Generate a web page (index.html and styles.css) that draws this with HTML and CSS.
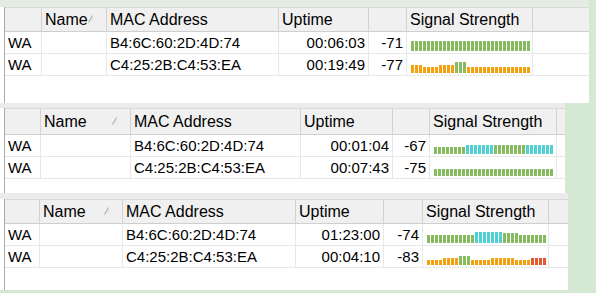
FILE: index.html
```html
<!DOCTYPE html>
<html>
<head>
<meta charset="utf-8">
<link rel="stylesheet" href="styles.css">
</head>
<body>
<div class="stack">
  <div class="panel p1">
    <div class="band"></div>
    <div class="lv">
      <div class="row hdr">
        <div class="cell"></div>
        <div class="cell name"><span>Name</span><svg class="sort" width="8" height="8" viewBox="0 0 8 8"><polygon points="0.5,7.5 4.5,0.5 7.5,7.5" fill="#ececec"/><line x1="0.5" y1="7.5" x2="4.5" y2="0.5" stroke="#a0a0a0" stroke-width="1"/></svg></div>
        <div class="cell">MAC Address</div>
        <div class="cell">Uptime</div>
        <div class="cell"></div>
        <div class="cell">Signal Strength</div>
        <div class="cell last"></div>
      </div>
      <div class="row">
        <div class="cell">WA</div>
        <div class="cell"></div>
        <div class="cell">B4:6C:60:2D:4D:74</div>
        <div class="cell r">00:06:03</div>
        <div class="cell r">-71</div>
        <div class="cell bars"><i class="g h10"></i><i class="g h10"></i><i class="g h10"></i><i class="g h10"></i><i class="g h10"></i><i class="g h10"></i><i class="g h10"></i><i class="g h10"></i><i class="g h10"></i><i class="g h10"></i><i class="g h10"></i><i class="g h10"></i><i class="g h10"></i><i class="g h10"></i><i class="g h10"></i><i class="g h10"></i><i class="g h10"></i><i class="g h10"></i><i class="g h10"></i><i class="g h10"></i><i class="g h10"></i><i class="g h10"></i><i class="g h10"></i><i class="g h10"></i><i class="g h10"></i><i class="g h10"></i><i class="g h10"></i><i class="g h10"></i><i class="g h10"></i><i class="g h10"></i></div>
        <div class="cell last"></div>
      </div>
      <div class="row">
        <div class="cell">WA</div>
        <div class="cell"></div>
        <div class="cell">C4:25:2B:C4:53:EA</div>
        <div class="cell r">00:19:49</div>
        <div class="cell r">-77</div>
        <div class="cell bars"><i class="o h8"></i><i class="o h8"></i><i class="o h8"></i><i class="o h6"></i><i class="o h6"></i><i class="o h6"></i><i class="o h6"></i><i class="o h8"></i><i class="o h8"></i><i class="o h8"></i><i class="o h8"></i><i class="g h11"></i><i class="g h11"></i><i class="g h11"></i><i class="o h6"></i><i class="o h6"></i><i class="o h6"></i><i class="o h6"></i><i class="o h6"></i><i class="o h6"></i><i class="o h6"></i><i class="o h6"></i><i class="o h6"></i><i class="o h6"></i><i class="o h6"></i><i class="o h6"></i><i class="o h6"></i><i class="o h6"></i><i class="o h6"></i><i class="o h6"></i></div>
        <div class="cell last"></div>
      </div>
    </div>
  </div>

  <div class="panel p2">
    <div class="band"></div>
    <div class="lv">
      <div class="row hdr">
        <div class="cell"></div>
        <div class="cell name"><span>Name</span><svg class="sort" width="8" height="8" viewBox="0 0 8 8"><polygon points="0.5,7.5 4.5,0.5 7.5,7.5" fill="#ececec"/><line x1="0.5" y1="7.5" x2="4.5" y2="0.5" stroke="#a0a0a0" stroke-width="1"/></svg></div>
        <div class="cell">MAC Address</div>
        <div class="cell">Uptime</div>
        <div class="cell"></div>
        <div class="cell">Signal Strength</div>
        <div class="cell last"></div>
      </div>
      <div class="row">
        <div class="cell">WA</div>
        <div class="cell"></div>
        <div class="cell">B4:6C:60:2D:4D:74</div>
        <div class="cell r">00:01:04</div>
        <div class="cell r">-67</div>
        <div class="cell bars"><i class="g h7"></i><i class="g h7"></i><i class="g h7"></i><i class="g h7"></i><i class="g h7"></i><i class="g h7"></i><i class="g h7"></i><i class="g h7"></i><i class="c h9"></i><i class="c h9"></i><i class="c h9"></i><i class="c h9"></i><i class="c h9"></i><i class="c h9"></i><i class="c h9"></i><i class="g h9"></i><i class="g h9"></i><i class="g h9"></i><i class="g h9"></i><i class="g h9"></i><i class="g h9"></i><i class="g h9"></i><i class="g h9"></i><i class="c h9"></i><i class="c h9"></i><i class="c h9"></i><i class="c h9"></i><i class="c h9"></i><i class="c h9"></i><i class="c h9"></i></div>
        <div class="cell last"></div>
      </div>
      <div class="row">
        <div class="cell">WA</div>
        <div class="cell"></div>
        <div class="cell">C4:25:2B:C4:53:EA</div>
        <div class="cell r">00:07:43</div>
        <div class="cell r">-75</div>
        <div class="cell bars"><i class="g h7"></i><i class="g h7"></i><i class="g h7"></i><i class="g h7"></i><i class="g h7"></i><i class="g h7"></i><i class="g h7"></i><i class="g h7"></i><i class="g h7"></i><i class="g h7"></i><i class="g h7"></i><i class="g h7"></i><i class="g h7"></i><i class="g h7"></i><i class="g h7"></i><i class="g h7"></i><i class="g h7"></i><i class="g h7"></i><i class="g h7"></i><i class="g h7"></i><i class="g h7"></i><i class="g h7"></i><i class="g h7"></i><i class="g h7"></i><i class="g h7"></i><i class="g h7"></i><i class="g h7"></i><i class="g h7"></i><i class="g h7"></i><i class="g h7"></i></div>
        <div class="cell last"></div>
      </div>
    </div>
  </div>

  <div class="panel p3">
    <div class="band"></div>
    <div class="lv">
      <div class="row hdr">
        <div class="cell"></div>
        <div class="cell name"><span>Name</span><svg class="sort" width="8" height="8" viewBox="0 0 8 8"><polygon points="0.5,7.5 4.5,0.5 7.5,7.5" fill="#ececec"/><line x1="0.5" y1="7.5" x2="4.5" y2="0.5" stroke="#a0a0a0" stroke-width="1"/></svg></div>
        <div class="cell">MAC Address</div>
        <div class="cell">Uptime</div>
        <div class="cell"></div>
        <div class="cell">Signal Strength</div>
        <div class="cell last"></div>
      </div>
      <div class="row">
        <div class="cell">WA</div>
        <div class="cell"></div>
        <div class="cell">B4:6C:60:2D:4D:74</div>
        <div class="cell r">01:23:00</div>
        <div class="cell r">-74</div>
        <div class="cell bars"><i class="g h8"></i><i class="g h8"></i><i class="g h8"></i><i class="g h8"></i><i class="g h8"></i><i class="g h8"></i><i class="g h8"></i><i class="g h8"></i><i class="g h8"></i><i class="g h8"></i><i class="g h8"></i><i class="g h8"></i><i class="c h11"></i><i class="c h11"></i><i class="c h11"></i><i class="c h11"></i><i class="c h11"></i><i class="c h11"></i><i class="c h11"></i><i class="g h10"></i><i class="g h10"></i><i class="g h10"></i><i class="g h10"></i><i class="g h8"></i><i class="g h8"></i><i class="g h8"></i><i class="g h8"></i><i class="g h8"></i><i class="g h8"></i><i class="g h8"></i></div>
        <div class="cell last"></div>
      </div>
      <div class="row">
        <div class="cell">WA</div>
        <div class="cell"></div>
        <div class="cell">C4:25:2B:C4:53:EA</div>
        <div class="cell r">00:04:10</div>
        <div class="cell r">-83</div>
        <div class="cell bars"><i class="o h5"></i><i class="o h5"></i><i class="o h5"></i><i class="o h5"></i><i class="o h7"></i><i class="o h7"></i><i class="o h7"></i><i class="o h7"></i><i class="g h9"></i><i class="g h9"></i><i class="g h9"></i><i class="o h5"></i><i class="o h5"></i><i class="o h5"></i><i class="o h5"></i><i class="o h5"></i><i class="o h7"></i><i class="o h7"></i><i class="o h7"></i><i class="o h7"></i><i class="o h7"></i><i class="o h7"></i><i class="o h5"></i><i class="o h5"></i><i class="o h5"></i><i class="o h5"></i><i class="rd h7"></i><i class="rd h7"></i><i class="rd h7"></i><i class="rd h7"></i></div>
        <div class="cell last"></div>
      </div>
    </div>
  </div>
</div>
</body>
</html>
```
FILE: styles.css
```css
html, body {
  margin: 0;
  padding: 0;
}
body {
  width: 596px;
  height: 293px;
  overflow: hidden;
  background: #d5e8d4;
  font-family: "Liberation Sans", Arial, sans-serif;
  color: #000;
}
.stack {
  display: flex;
  flex-direction: column;
  align-items: flex-start;
}
.panel {
  display: flex;
  flex-direction: column;
  background: #fff;
  padding-left: 4px;
  box-sizing: border-box;
}
.p1 { width: 589px; height: 103px; }
.p2 { width: 565px; height: 90px; }
.p3 { width: 568px; height: 97px; }

.band { background: #ebebeb; margin-left: -4px; }
.p1 .band { height: 7px; background: #e5ece3; }
.p2 .band { height: 5px; }
.p3 .band { height: 6px; }

.lv {
  flex: 1;
  border-left: 1px solid #aaaaaa;
  background: #fff;
}
.row {
  display: grid;
  height: 22px;
  box-sizing: border-box;
  border-bottom: 1px solid #e8e8e8;
  font-size: 15px;
}
.p1 .row { grid-template-columns: 37px 65px 172px 90px 38px 126px 1fr; }
.p2 .row { grid-template-columns: 36px 90px 170px 92px 37px 127px 1fr; }
.p3 .row { grid-template-columns: 35px 83px 173px 88px 39px 126px 1fr; }

.hdr {
  background: #f0f0f0;
  border-top: 1px solid #d8d8d8;
  border-bottom: 1px solid #cfcfcf;
  font-size: 16px;
}
.p1 .hdr { height: 25px; }
.p2 .hdr { height: 27px; }
.p3 .hdr { height: 25px; }

.cell {
  display: flex;
  align-items: center;
  padding: 0 3px;
  border-right: 1px solid #e8e8e8;
  white-space: nowrap;
  overflow: hidden;
  min-width: 0;
}
.hdr .cell { border-right-color: #d2d2d2; }
.cell.last { border-right: none; }
.cell.r { justify-content: flex-end; padding-right: 3px; }
.name { justify-content: space-between; padding-right: 10px; }
.p1 .name { padding-right: 12px; }
.sort { flex: none; margin-top: -2px; }

.bars {
  align-items: flex-end;
  gap: 1px;
  padding: 0 0 2px 4px;
}
.bars i { display: block; width: 3px; flex: none; }
.g { background: #86bc5f; }
.c { background: #4fd0d2; }
.o { background: #f4a10e; }
.rd { background: #e3592b; }
.h5 { height: 5px; }
.h6 { height: 6px; }
.h7 { height: 7px; }
.h8 { height: 8px; }
.h9 { height: 9px; }
.h10 { height: 10px; }
.h11 { height: 11px; }
```
